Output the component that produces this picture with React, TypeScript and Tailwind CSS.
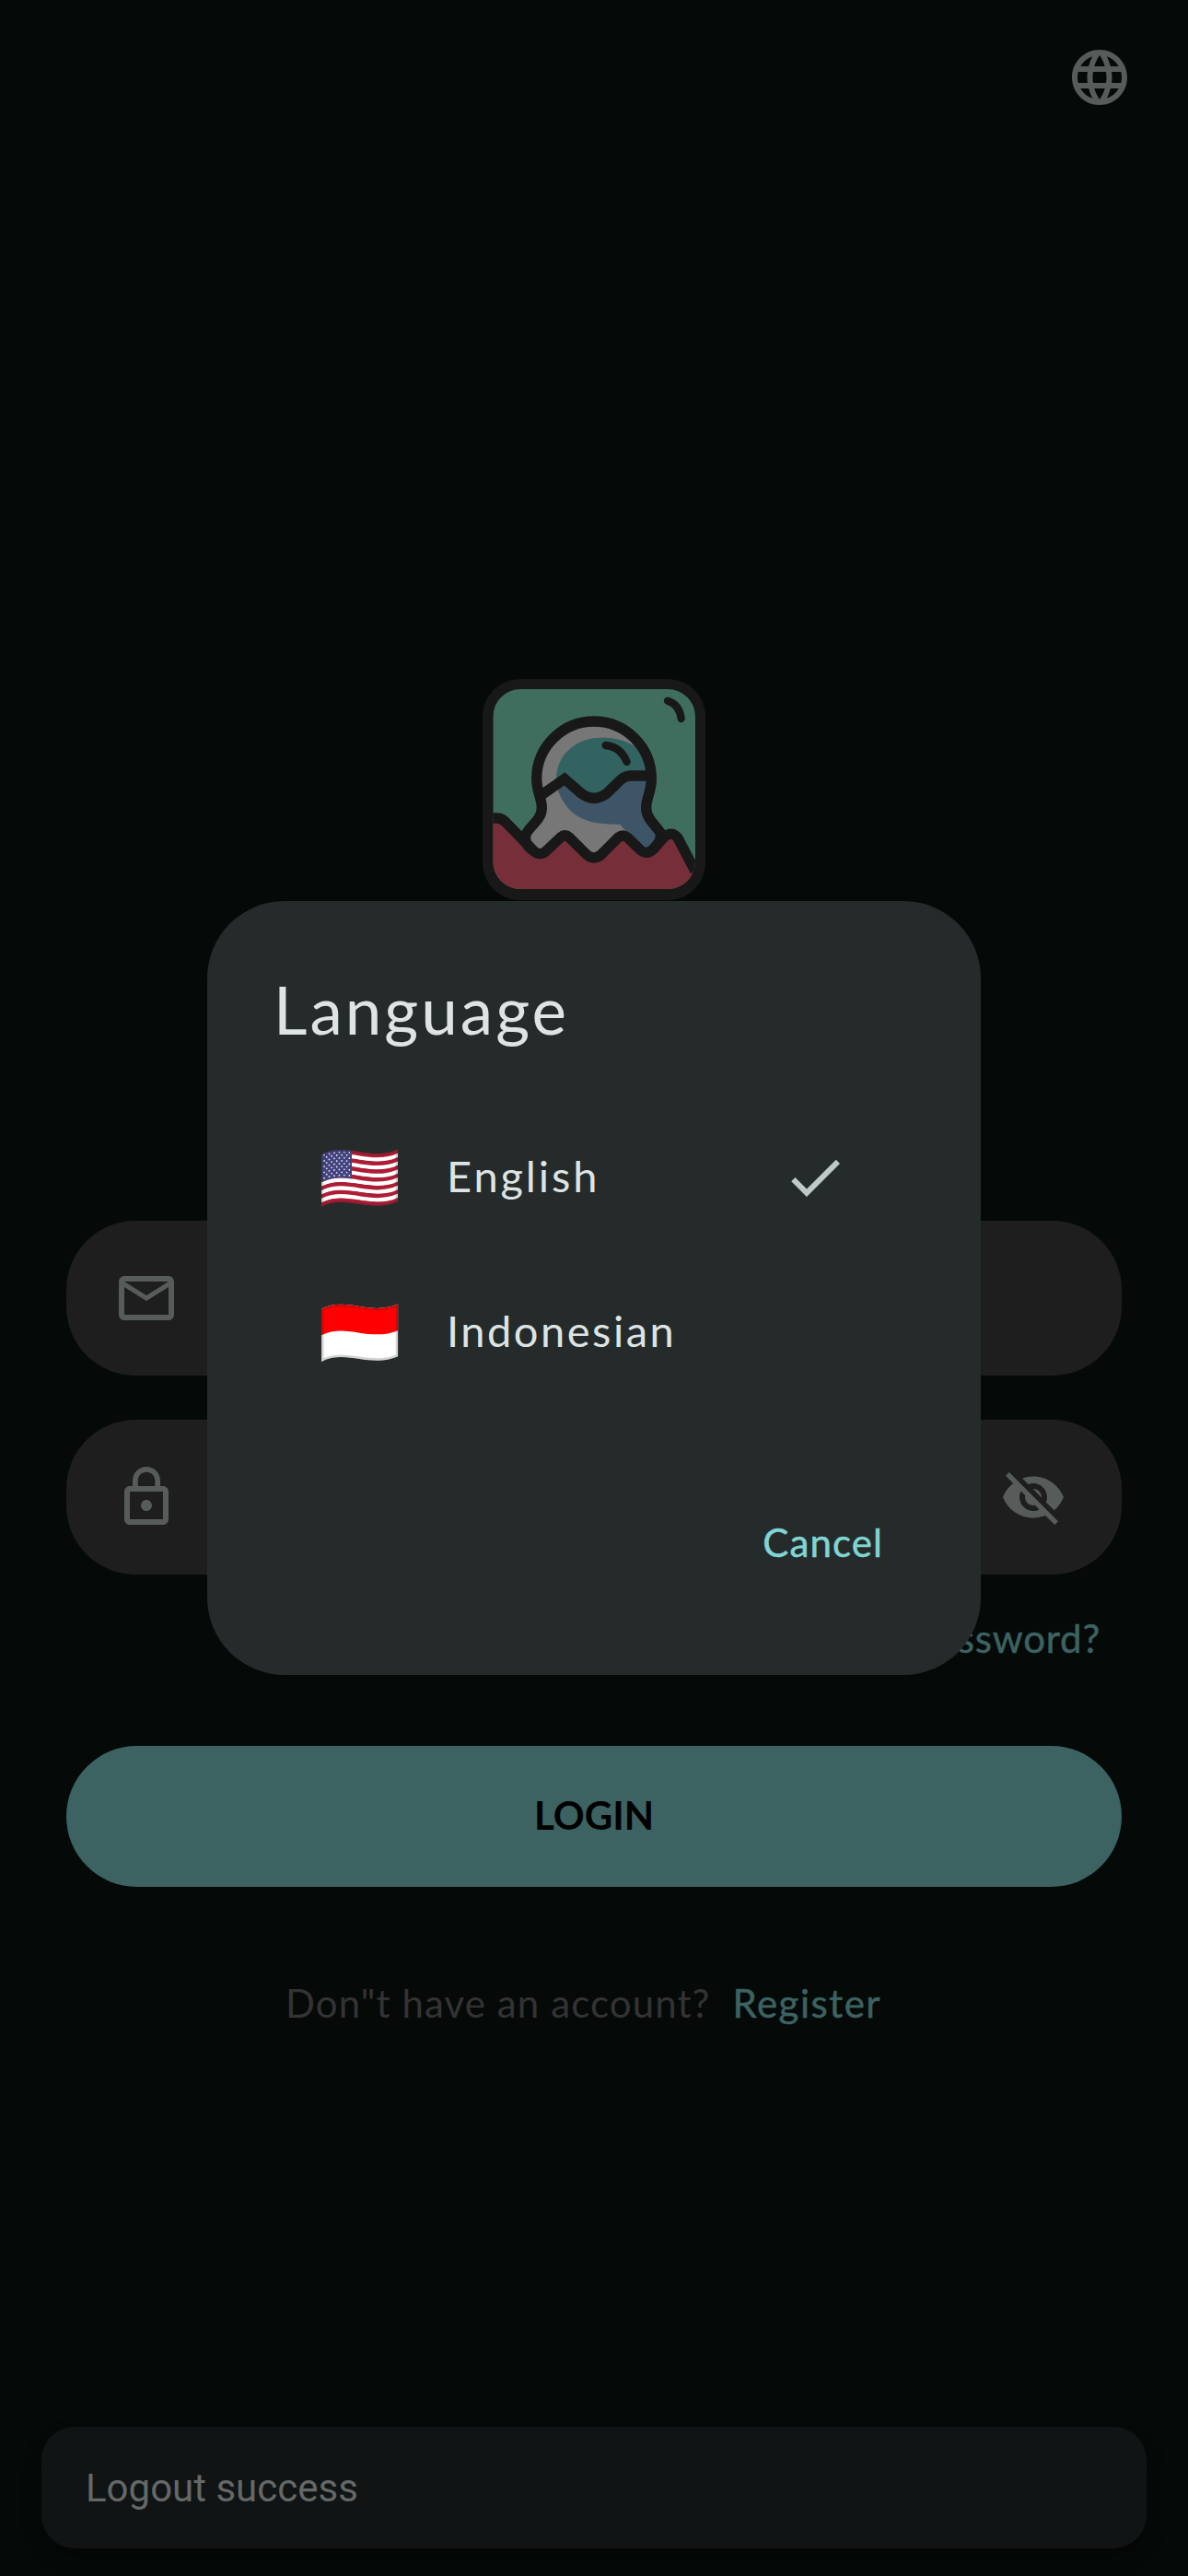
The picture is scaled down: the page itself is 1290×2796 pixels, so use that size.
import React from "react";
import { MdCheck, MdLanguage, MdLockOutline, MdMailOutline, MdVisibilityOff } from "react-icons/md";

const US_STRIPES = Array.from({ length: 13 }, (_, i) => i);
const US_STARS = Array.from({ length: 9 }, (_, row) =>
  Array.from({ length: row % 2 === 0 ? 6 : 5 }, (_, col) => ({
    x: 66 + col * 16.4 + (row % 2 === 0 ? 0 : 8.2),
    y: 8 + row * 9.4,
  })),
).flat();

function waveY(x: number) {
  return 94 - 7.5 * Math.sin(((x - 70) / 225) * Math.PI * 2) + (x < 70 ? (70 - x) * 0.3 : 0);
}

function UsFlag() {
  return (
    <svg viewBox="54 75 255 203" className="h-[67.67px] w-[85px]">
      <defs>
        <clipPath id="us-clip">
          <path d="M57 101C100 80 138 86 181 93S265 104 306 85V256C265 274 224 270 181 264S100 251 57 272Z" />
        </clipPath>
        <clipPath id="us-canton">
          <path d="M57 101C95 82 125 84 157 89V181C125 176 95 174 57 193Z" />
        </clipPath>
      </defs>
      <g clipPath="url(#us-clip)">
        {US_STRIPES.map((i) => (
          <path
            key={i}
            transform={`translate(0 ${i * 13.15})`}
            d="M57 101C100 80 138 86 181 93S265 104 306 85V102C265 117 224 113 181 107S100 94 57 115Z"
            fill={i % 2 === 0 ? "#b01c35" : "#ffffff"}
          />
        ))}
        <g clipPath="url(#us-canton)">
          <rect x="57" y="75" width="100" height="125" fill="#42427f" />
          {US_STARS.map((s, i) => (
            <circle key={i} cx={s.x} cy={s.y + waveY(s.x)} r="2.7" fill="#e6e6f0" />
          ))}
        </g>
        <path
          d="M57 101C100 80 138 86 181 93S265 104 306 85V256C265 274 224 270 181 264S100 251 57 272Z"
          fill="none"
          stroke="#202020"
          strokeOpacity=".2"
          strokeWidth="14"
        />
      </g>
    </svg>
  );
}

function IndonesiaFlag() {
  return (
    <svg viewBox="54 69 255 203" className="h-[67.67px] w-[85px]">
      <defs>
        <clipPath id="id-clip">
          <path d="M57 95C100 74 138 80 181 87S265 98 307 79V250C265 268 224 264 181 258S100 245 57 267Z" />
        </clipPath>
      </defs>
      <g clipPath="url(#id-clip)">
        <rect x="50" y="60" width="260" height="220" fill="#fff" />
        <path d="M57 60H308V165C265 183 224 179 181 173S100 160 57 181Z" fill="#f00" />
        <path
          d="M57 95C100 74 138 80 181 87S265 98 307 79V250C265 268 224 264 181 258S100 245 57 267Z"
          fill="none"
          stroke="#202020"
          strokeOpacity=".2"
          strokeWidth="15"
        />
      </g>
    </svg>
  );
}

function Logo() {
  return (
    <svg viewBox="42 51 726 720" className="h-[240px] w-[242px]">
      <rect x="42" y="51" width="726" height="720" rx="122" fill="#181818" />
      <clipPath id="logo-inner">
        <rect x="76" y="84" width="659" height="651" rx="90" />
      </clipPath>
      <clipPath id="logo-figure">
        <path d="M405 195A186 186 0 0 1 591 381C591 412 575 440 575 472C577 510 612 530 625 562L590 605Q575 623 559 605L499 550L435 617Q404 645 374 617L310 560L250 614Q225 630 201 614Q175 585 184 560C192 530 235 510 235 470C235 440 219 412 219 381A186 186 0 0 1 405 195Z" />
      </clipPath>
      <g clipPath="url(#logo-inner)">
        <rect x="76" y="84" width="659" height="651" fill="#3f6e5f" />
        <path
          d="M60 504H95Q107 504 117 515L201 604Q225 631 250 610L294 567Q310 555 325 567L374 617Q404 650 435 617L484 567Q500 555 514 567L551 603Q575 627 600 603L633 567Q655 546 678 567L730 665L760 760H60Z"
          fill="#762f38"
        />
        <g clipPath="url(#logo-figure)">
          <rect x="150" y="180" width="490" height="470" fill="#777777" />
          <path
            d="M283 372C284 298 348 242 430 242C480 242 515 255 545 275L600 330L640 560L575 620L490 525C390 524 325 510 288 415Z"
            fill="#3e5568"
          />
          <path
            d="M283 372C284 298 348 242 430 242C480 242 515 255 545 275L600 330V366H523Q505 366 490 381L445 423Q405 455 362 423L310 376L283 396Z"
            fill="#336361"
          />
        </g>
        <g fill="none" stroke="#181818" strokeWidth="34">
          <path d="M60 504H88Q104 504 117 517L204 606Q226 632 250 610L297 566Q310 555 324 566L374 616Q404 650 435 616L484 567Q500 555 514 567L551 603Q575 629 600 603L632 567Q658 542 679 570L735 677" />
          <path d="M182 560C192 530 235 512 235 470C235 440 218 418 218 376A187 187 0 0 1 592 376C592 418 575 440 575 470C575 510 612 530 628 562" />
          <path d="M232 430L309 376L363 423Q405 455 447 423L490 381Q506 366 523 366H588" />
          <path d="M182 555Q178 590 204 608M622 555Q624 580 600 604" />
          <path d="M443 267Q492 272 512 321" strokeWidth="25" strokeLinecap="round" />
          <path d="M645 122Q684 134 689 180" strokeWidth="25" strokeLinecap="round" />
        </g>
      </g>
    </svg>
  );
}

type LanguageRowProps = { flag: React.ReactNode; label: React.ReactNode; selected?: boolean };

function LanguageRow({ flag, label, selected }: LanguageRowProps) {
  return (
    <div className="flex h-[168px] items-center">
      {flag}
      {label}
      {selected && <MdCheck className="ml-auto size-[72px] text-[#bec9c8]" />}
    </div>
  );
}

function LanguageDialog() {
  return (
    <div className="flex h-[840px] w-[840px] flex-col rounded-[84px] bg-[#252b2b] pt-[73px] font-['Lato','Noto_Sans',sans-serif]">
      <h1 className="ml-[72px] text-[71px] leading-[90px] tracking-[3px] text-[#dde4e3]">Language</h1>
      <div className="mt-[53px] pr-36 pl-[123px]">
        <LanguageRow
          flag={<UsFlag />}
          label={<span className="ml-[52px] pb-1 text-[47px] tracking-[2.9px] text-[#dde4e3]">English</span>}
          selected
        />
        <LanguageRow
          flag={<IndonesiaFlag />}
          label={<span className="ml-[52px] pb-1 text-[47px] tracking-[2.5px] text-[#dde4e3]">Indonesian</span>}
        />
      </div>
      <button className="mt-[114px] mr-[106px] self-end text-[42px] leading-[60px] tracking-[1.1px] text-[#80d5d4] [-webkit-text-stroke:0.5px]">
        Cancel
      </button>
    </div>
  );
}

export default function App() {
  return (
    <div className="relative h-[2796px] w-[1290px] overflow-hidden bg-[#050a09] font-['Lato','Noto_Sans',sans-serif]">
      <main className="flex h-full flex-col">
        <header className="flex justify-end pt-12 pr-[60px]">
          <MdLanguage className="size-[72px] text-[#575c5b]" />
        </header>
        <div className="mt-[617px] flex justify-center">
          <Logo />
        </div>
        <form className="mx-[72px] mt-[347.5px] flex flex-col">
          <div className="flex h-[168px] items-center rounded-[75px] bg-[#1e1e1e] pl-[51px]">
            <MdMailOutline className="size-[72px] text-[#575c5b]" />
          </div>
          <div className="mt-12 flex h-[168px] items-center justify-between rounded-[75px] bg-[#1e1e1e] pr-[60px] pl-[51px]">
            <MdLockOutline className="size-[72px] text-[#575c5b]" />
            <MdVisibilityOff className="size-[72px] text-[#575c5b]" />
          </div>
          <a className="mt-[39px] mr-[23px] self-end text-[42px] leading-[60px] tracking-[0.8px] text-[#3c6261] [-webkit-text-stroke:0.5px]">
            Forgot Password?
          </a>
          <button
            type="button"
            className="mt-[87px] h-[153px] rounded-full bg-[#3c6261] pb-0.5 text-[42px] font-bold text-black"
          >
            LOGIN
          </button>
        </form>
        <p className="mt-[96px] ml-[310px] flex text-[42px] leading-[60px]">
          <span className="tracking-[1.1px] text-[#333333]">Don&quot;t have an account?</span>
          <a className="ml-6 tracking-[1.5px] text-[#3c6261] [-webkit-text-stroke:0.5px]">Register</a>
        </p>
        <div className="mx-[45px] mt-auto mb-[30px] flex h-[132px] items-center rounded-[36px] bg-[#101414] pl-12 font-['Roboto',sans-serif] text-[42px] text-[#646867] shadow-[0_12px_20px_#00000070]">
          Logout success
        </div>
      </main>
      <div className="absolute inset-0 flex items-start justify-center pt-[978px]">
        <LanguageDialog />
      </div>
    </div>
  );
}
